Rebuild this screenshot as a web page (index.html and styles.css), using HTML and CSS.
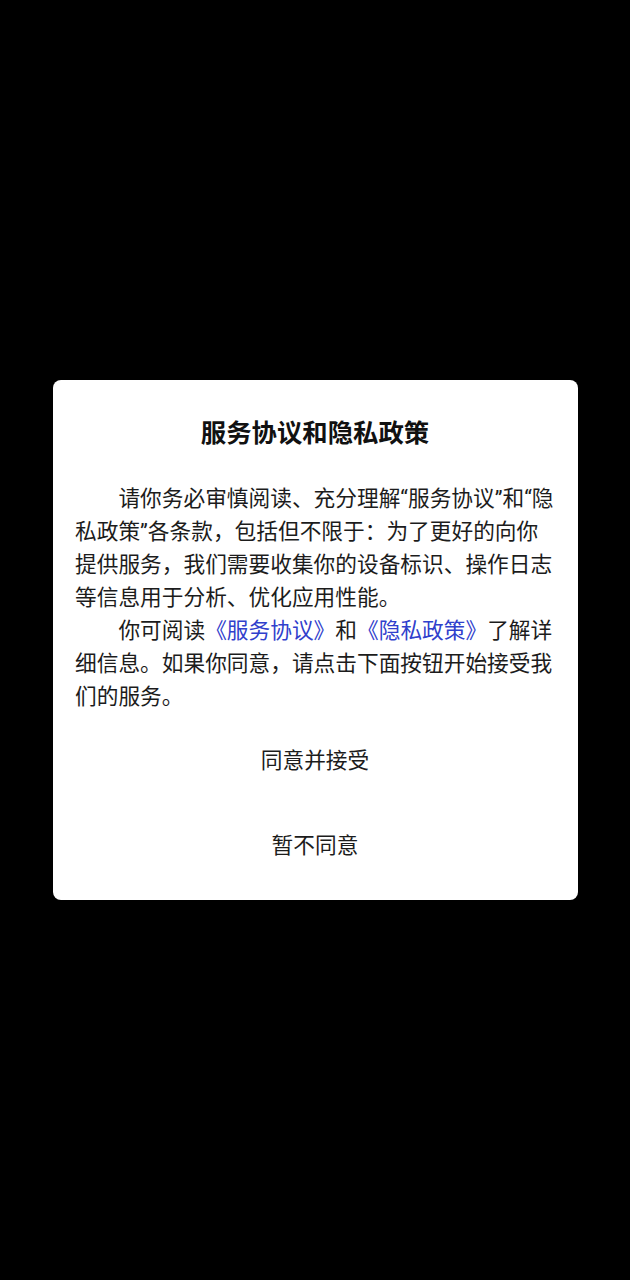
FILE: index.html
```html
<!DOCTYPE html>
<html lang="zh-CN">
<head>
<meta charset="utf-8">
<title>服务协议和隐私政策</title>
<link rel="stylesheet" href="styles.css">
</head>
<body>
<div class="screen">
  <div class="dialog">
    <h1 class="title">服务协议和隐私政策</h1>
    <div class="content">
      <p class="para">请你务必审慎阅读、充分理解“服务协议”和“隐私政策”各条款，包括但不限于：为了更好的向你提供服务，我们需要收集你的设备标识、操作日志等信息用于分析、优化应用性能。</p>
      <p class="para">你可阅读<span class="link">《服务协议》</span>和<span class="link">《隐私政策》</span>了解详细信息。如果你同意，请点击下面按钮开始接受我们的服务。</p>
    </div>
    <div class="actions">
      <div class="btn">同意并接受</div>
      <div class="btn">暂不同意</div>
    </div>
  </div>
</div>
</body>
</html>
```

FILE: styles.css
```css
html, body {
  margin: 0;
  padding: 0;
  background: #000;
}
body {
  font-family: Roboto, "Noto Sans CJK SC", sans-serif;
  color: #1c1c1c;
}
.screen {
  height: 1280px;
  display: flex;
  align-items: center;
  justify-content: center;
}
.dialog {
  width: 525px;
  background: #fff;
  border-radius: 8px;
  padding: 37.5px 0 14px;
  box-sizing: border-box;
  display: flex;
  flex-direction: column;
}
.title {
  margin: 0;
  font-size: 25.4px;
  line-height: 33px;
  font-weight: 700;
  text-align: center;
  color: #111;
}
.content {
  margin-top: 32px;
  padding: 0 22.5px;
}
.para {
  margin: 0;
  font-size: 21.7px;
  line-height: 33px;
  text-indent: 2em;
}
.link {
  color: #3040cc;
}
.actions {
  margin-top: 3px;
  display: flex;
  flex-direction: column;
}
.btn {
  height: 85px;
  display: flex;
  align-items: center;
  justify-content: center;
  font-size: 21.7px;
  color: #1c1c1c;
}
```
